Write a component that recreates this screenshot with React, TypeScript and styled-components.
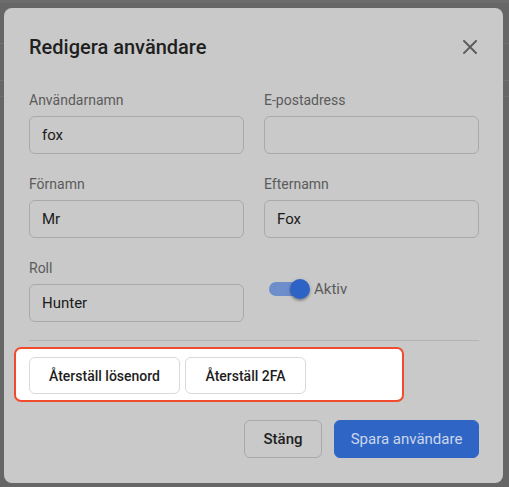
import React from "react";
import styled, { createGlobalStyle } from "styled-components";

const Global = createGlobalStyle`
  html, body { margin: 0; padding: 0; }
  body {
    width: 509px;
    height: 487px;
    overflow: hidden;
    font-family: Roboto, "Noto Sans", "Liberation Sans", sans-serif;
    background: #666666;
  }
`;

const Backdrop = styled.div`
  width: 509px;
  height: 487px;
  box-sizing: border-box;
  padding: 8px 6px 4px 4px;
  background-color: #666666;
  background-image:
    linear-gradient(#6c6c6c, #6c6c6c),
    linear-gradient(#717171, #717171),
    linear-gradient(#717171, #717171),
    linear-gradient(#6e6e6e, #6e6e6e);
  background-repeat: no-repeat;
  background-size: 100% 3px, 100% 1px, 100% 1px, 100% 1px;
  background-position: 0 0, 0 43px, 0 80px, 0 96px;
`;

const Dialog = styled.div`
  width: 499px;
  height: 475px;
  box-sizing: border-box;
  background: #c9c9c9;
  border-radius: 8px;
  padding: 23px 24px 25px 25px;
  display: flex;
  flex-direction: column;
`;

const Header = styled.div`
  display: flex;
  align-items: center;
  justify-content: space-between;
  height: 32px;
`;

const Title = styled.h2`
  margin: 0;
  font-size: 20px;
  line-height: 32px;
  font-weight: 500;
  color: #1f1f1f;
`;

const CloseButton = styled.button`
  width: 24px;
  height: 24px;
  margin-right: -3px;
  border: none;
  background: transparent;
  padding: 0;
  display: flex;
  align-items: center;
  justify-content: center;
  color: #595959;
  cursor: pointer;
`;

const FormGrid = styled.div`
  margin-top: 27px;
  display: grid;
  grid-template-columns: 215px 215px;
  column-gap: 20px;
  row-gap: 20px;
`;

const Field = styled.div`
  display: flex;
  flex-direction: column;
`;

const Label = styled.label`
  font-size: 14px;
  line-height: 20px;
  color: #5b5b5b;
  margin-bottom: 6px;
`;

const Input = styled.div`
  height: 38px;
  box-sizing: border-box;
  border: 1px solid #a9a9a9;
  border-radius: 6px;
  padding: 0 12px;
  display: flex;
  align-items: center;
  font-size: 15px;
  color: #1a1a1a;
`;

const SwitchRow = styled.div`
  padding-top: 12px;
  display: flex;
  align-items: center;
  height: 38px;
`;

const SwitchTrack = styled.div`
  position: relative;
  width: 34px;
  height: 14px;
  margin-left: 5px;
  border-radius: 7px;
  background: #6e8ecb;
`;

const SwitchThumb = styled.div`
  position: absolute;
  top: -3px;
  right: -7px;
  width: 20px;
  height: 20px;
  border-radius: 50%;
  background: #2d63c4;
  box-shadow: 0 2px 2px rgba(0, 0, 0, 0.25), 0 1px 4px rgba(0, 0, 0, 0.15);
`;

const SwitchLabel = styled.span`
  margin-left: 11px;
  font-size: 15px;
  color: #5b5b5b;
`;

const Divider = styled.hr`
  margin: 18px 0 0;
  border: none;
  border-top: 1px solid #b3b3b3;
  height: 0;
`;

const Highlight = styled.div`
  margin: 6px 0 0 -15px;
  width: 390px;
  box-sizing: border-box;
  background: #ffffff;
  border: 2px solid #f04b2d;
  border-radius: 7px;
  padding: 8px 13px 6px;
  display: flex;
  gap: 5px;
`;

const SecondaryButton = styled.button<{ $w: number }>`
  width: ${(p) => p.$w}px;
  height: 37px;
  box-sizing: border-box;
  border: 1px solid #d9d9d9;
  border-radius: 6px;
  background: #ffffff;
  font-family: inherit;
  font-size: 14px;
  font-weight: 500;
  color: #1e1e1e;
  cursor: pointer;
`;

const Footer = styled.div`
  margin-top: 18px;
  display: flex;
  justify-content: flex-end;
  gap: 12px;
`;

const FooterButton = styled.button<{ $primary?: boolean; $w: number }>`
  width: ${(p) => p.$w}px;
  height: 38px;
  box-sizing: border-box;
  border-radius: 6px;
  font-family: inherit;
  font-size: 15px;
  cursor: pointer;
  border: 1px solid ${(p) => (p.$primary ? "#2f66c6" : "#a9a9a9")};
  background: ${(p) => (p.$primary ? "#2f66c6" : "transparent")};
  color: ${(p) => (p.$primary ? "#ccd6e9" : "#1e1e1e")};
  font-weight: ${(p) => (p.$primary ? 400 : 500)};
`;

const fields = [
  { label: "Användarnamn", value: "fox" },
  { label: "E-postadress", value: "" },
  { label: "Förnamn", value: "Mr" },
  { label: "Efternamn", value: "Fox" },
];

export default function App() {
  return (
    <>
      <Global />
      <Backdrop>
        <Dialog>
          <Header>
            <Title>Redigera användare</Title>
            <CloseButton aria-label="Stäng">
              <svg width="14" height="14" viewBox="0 0 14 14">
                <path d="M1 1 L13 13 M13 1 L1 13" stroke="currentColor" strokeWidth="1.9" strokeLinecap="square" />
              </svg>
            </CloseButton>
          </Header>
          <FormGrid>
            {fields.map((f) => (
              <Field key={f.label}>
                <Label>{f.label}</Label>
                <Input>{f.value}</Input>
              </Field>
            ))}
            <Field>
              <Label>Roll</Label>
              <Input>Hunter</Input>
            </Field>
            <SwitchRow>
              <SwitchTrack>
                <SwitchThumb />
              </SwitchTrack>
              <SwitchLabel>Aktiv</SwitchLabel>
            </SwitchRow>
          </FormGrid>
          <Divider />
          <Highlight>
            <SecondaryButton $w={151}>Återställ lösenord</SecondaryButton>
            <SecondaryButton $w={121}>Återställ 2FA</SecondaryButton>
          </Highlight>
          <Footer>
            <FooterButton $w={78}>Stäng</FooterButton>
            <FooterButton $w={145} $primary>Spara användare</FooterButton>
          </Footer>
        </Dialog>
      </Backdrop>
    </>
  );
}
